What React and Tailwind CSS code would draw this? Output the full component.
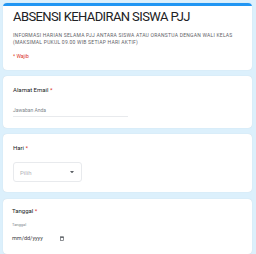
import React from 'react';

const FONT = { fontFamily: 'Roboto, "Liberation Sans", sans-serif' };

function Card({ children, top = false, className = '' }) {
  return (
    <div className={`bg-white rounded-[4px] overflow-hidden shadow-[0_0_1px_rgba(0,0,0,0.15)] shrink-0 ${className}`}>
      {top && <div className="h-[3px] bg-[#2196f3]" />}
      {children}
    </div>
  );
}

function Label({ children }) {
  return (
    <p className="text-[6px] leading-[8px] text-[#202124]">
      {children} <span className="text-[#d93025]">*</span>
    </p>
  );
}

export default function App() {
  return (
    <div style={FONT} className="w-[256px] h-[254px] overflow-hidden bg-[#dcf0fc] pl-[3px] pr-[4px] pt-[3px] flex flex-col">
      <Card top className="h-[67px]">
        <div className="px-[10px] pt-[3px]">
          <h1 className="text-[13px] leading-[15px] text-[#202124] tracking-[-0.6px] whitespace-nowrap">
            ABSENSI KEHADIRAN SISWA PJJ
          </h1>
          <p className="mt-[8px] text-[5px] leading-[7px] text-[#5f6368] tracking-[0.23px] whitespace-nowrap">
            INFORMASI HARIAN SELAMA PJJ ANTARA SISWA ATAU ORANSTUA DENGAN WALI KELAS
            <br />
            (MAKSIMAL PUKUL 09.00 WIB SETIAP HARI AKTIF)
          </p>
          <p className="mt-[7px] text-[5px] leading-[7px] text-[#d93025]">* Wajib</p>
        </div>
      </Card>

      <Card className="mt-[6px] h-[52px]">
        <div className="px-[10px] pt-[10px]">
          <Label>Alamat Email</Label>
          <div className="mt-[12.5px] w-[115px] border-b border-[#e8eaed] pb-[2.5px] text-[5px] leading-[7px] text-[#80868b]">
            Jawaban Anda
          </div>
        </div>
      </Card>

      <Card className="mt-[6px] h-[58px]">
        <div className="px-[10px] pt-[10px]">
          <Label>Hari</Label>
          <div className="mt-[10px] w-[69px] h-[20px] border border-[#e8eaed] rounded-[3px] flex items-center justify-between pl-[6px] pr-[7px]">
            <span className="text-[6px] text-[#b0b4b8]">Pilih</span>
            <svg width="4" height="2.5" viewBox="0 0 4 2.5">
              <path d="M0 0h4L2 2.5z" fill="#5f6368" />
            </svg>
          </div>
        </div>
      </Card>

      <Card className="mt-[7px] flex-1">
        <div className="px-[9px] pt-[8px]">
          <Label>Tanggal</Label>
          <p className="mt-[7px] text-[4px] leading-[6px] text-[#80868b]">Tanggal</p>
          <div className="mt-[6px] w-[52px] flex items-center justify-between">
            <span className="text-[5.5px] leading-[8px] text-[#3c4043]">mm/dd/yyyy</span>
            <svg width="4" height="5" viewBox="0 0 4 5">
              <rect x="0.4" y="0.8" width="3.2" height="3.8" fill="none" stroke="#5f6368" strokeWidth="0.7" />
              <rect x="0.4" y="0.8" width="3.2" height="1.1" fill="#5f6368" />
            </svg>
          </div>
        </div>
      </Card>
    </div>
  );
}
